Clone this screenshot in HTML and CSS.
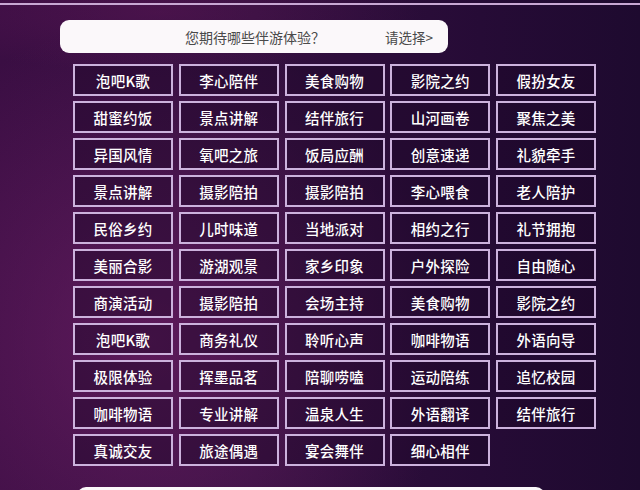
FILE: index.html
```html
<!DOCTYPE html>
<html lang="zh">
<head>
<meta charset="utf-8">
<link rel="stylesheet" href="styles.css">
</head>
<body>
<div class="page">
  <div class="rule"></div>
  <div class="header">
    <span class="question">您期待哪些伴游体验？</span>
    <span class="choose">请选择&gt;</span>
  </div>
  <div class="grid">
    <div class="tag">泡吧K歌</div><div class="tag">李心陪伴</div><div class="tag">美食购物</div><div class="tag">影院之约</div><div class="tag">假扮女友</div>
    <div class="tag">甜蜜约饭</div><div class="tag">景点讲解</div><div class="tag">结伴旅行</div><div class="tag">山河画卷</div><div class="tag">聚焦之美</div>
    <div class="tag">异国风情</div><div class="tag">氧吧之旅</div><div class="tag">饭局应酬</div><div class="tag">创意速递</div><div class="tag">礼貌牵手</div>
    <div class="tag">景点讲解</div><div class="tag">摄影陪拍</div><div class="tag">摄影陪拍</div><div class="tag">李心喂食</div><div class="tag">老人陪护</div>
    <div class="tag">民俗乡约</div><div class="tag">儿时味道</div><div class="tag">当地派对</div><div class="tag">相约之行</div><div class="tag">礼节拥抱</div>
    <div class="tag">美丽合影</div><div class="tag">游湖观景</div><div class="tag">家乡印象</div><div class="tag">户外探险</div><div class="tag">自由随心</div>
    <div class="tag">商演活动</div><div class="tag">摄影陪拍</div><div class="tag">会场主持</div><div class="tag">美食购物</div><div class="tag">影院之约</div>
    <div class="tag">泡吧K歌</div><div class="tag">商务礼仪</div><div class="tag">聆听心声</div><div class="tag">咖啡物语</div><div class="tag">外语向导</div>
    <div class="tag">极限体验</div><div class="tag">挥墨品茗</div><div class="tag">陪聊唠嗑</div><div class="tag">运动陪练</div><div class="tag">追忆校园</div>
    <div class="tag">咖啡物语</div><div class="tag">专业讲解</div><div class="tag">温泉人生</div><div class="tag">外语翻译</div><div class="tag">结伴旅行</div>
    <div class="tag">真诚交友</div><div class="tag">旅途偶遇</div><div class="tag">宴会舞伴</div><div class="tag">细心相伴</div>
  </div>
  <div class="footer-bar"></div>
</div>
</body>
</html>
```
FILE: styles.css
```css
html, body {
  margin: 0;
  padding: 0;
}
body {
  width: 640px;
  height: 490px;
  overflow: hidden;
  font-family: "Noto Sans CJK SC", "Noto Sans", sans-serif;
}
.page {
  width: 640px;
  height: 490px;
  overflow: hidden;
  padding-top: 3px;
  box-sizing: border-box;
  background:
    radial-gradient(ellipse 300px 320px at 150px 340px, rgba(125, 35, 112, 0.55), rgba(125, 35, 112, 0) 100%),
    radial-gradient(ellipse 260px 60px at 160px 12px, rgba(110, 25, 95, 0.35), rgba(110, 25, 95, 0) 100%),
    linear-gradient(90deg, #3a0e43 0%, #33103f 40%, #260b36 75%, #1e0a2f 100%);
}
.rule {
  height: 2px;
  background: #c8a8d4;
}
.header {
  margin: 15px 0 0 60px;
  width: 388px;
  height: 33px;
  background: #fbf8fa;
  border-radius: 9px;
  position: relative;
  display: flex;
  align-items: center;
  justify-content: center;
}
.question {
  font-size: 14px;
  color: #4a4a4a;
  margin-left: 2px;
}
.choose {
  position: absolute;
  right: 15px;
  font-size: 13.5px;
  color: #4a4a4a;
}
.grid {
  margin: 11px 0 0 73px;
  width: 523px;
  display: grid;
  grid-template-columns: repeat(5, 100px);
  grid-auto-rows: 32px;
  column-gap: 5.75px;
  row-gap: 5px;
}
.tag {
  box-sizing: border-box;
  border: 2px solid #ccb2dd;
  background: rgba(28, 6, 40, 0.45);
  color: #ffffff;
  font-size: 14.5px;
  font-weight: 500;
  display: flex;
  align-items: center;
  justify-content: center;
  letter-spacing: 0.3px;
}
.footer-bar {
  margin: 21px 0 0 77px;
  width: 468px;
  height: 30px;
  background: #fbf8fa;
  border-radius: 9px;
}
```
